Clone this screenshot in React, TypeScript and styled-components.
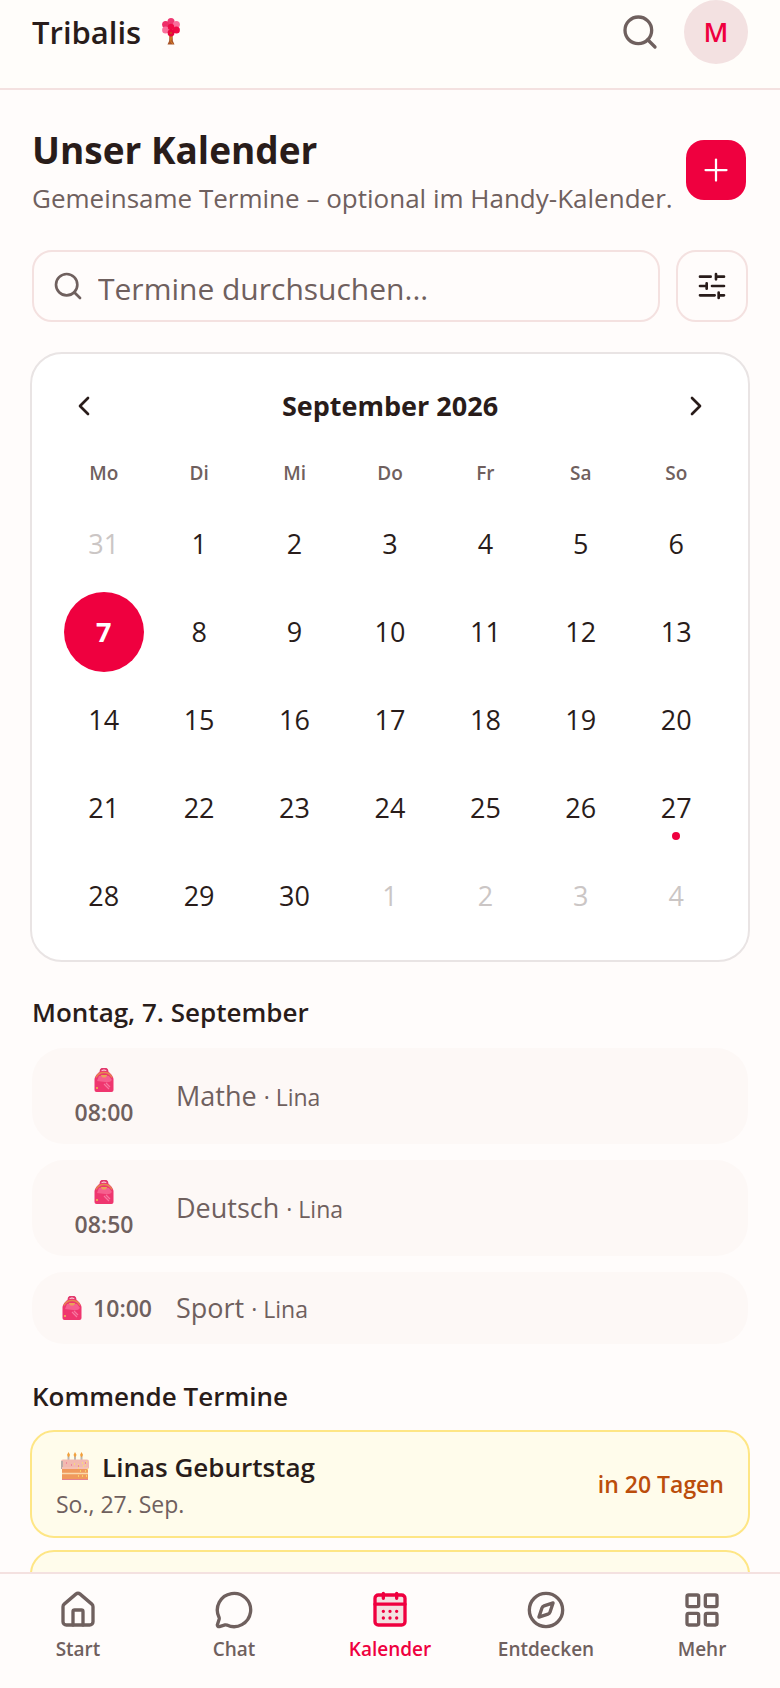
import React from 'react';
import styled, { createGlobalStyle, css } from 'styled-components';
import { ChevronLeft, ChevronRight, Compass, House, LayoutGrid, MessageCircle, Plus, Search } from 'lucide-react';

const color = {
  page: '#fffcfb',
  header: '#fffdfa',
  text: '#291c1a',
  muted: '#6f605e',
  line: '#f4e1e0',
  cardLine: '#e9e4e4',
  primary: '#ef003f',
  soft: '#f3e1e1',
};

const GlobalStyle = createGlobalStyle`
  *, *::before, *::after { box-sizing: border-box; }
  html, body { margin: 0; }
  body {
    background: ${color.page};
    color: ${color.text};
    font-family: "Open Sans", "Noto Sans", sans-serif;
    font-size: 27px;
    line-height: 36px;
  }
  button, input { font: inherit; color: inherit; }
  button { border: 0; padding: 0; background: none; cursor: pointer; }
  h1, h2, p, ul { margin: 0; padding: 0; }
  ul { list-style: none; }
`;

const Page = styled.div`
  height: 100vh;
  display: flex;
  flex-direction: column;
`;

const Header = styled.header`
  display: flex;
  align-items: center;
  justify-content: space-between;
  padding: 0 32px 24px;
  background: ${color.header};
  border-bottom: 2px solid ${color.line};
`;

const Brand = styled.a`
  display: flex;
  align-items: center;
  gap: 14px;
  height: 64px;
  color: inherit;
  text-decoration: none;
  font-size: 31px;
  font-weight: 600;
`;

const HeaderActions = styled.div`
  display: flex;
  align-items: center;
  gap: 24px;
`;

const IconButton = styled.button`
  display: flex;
  align-items: center;
  justify-content: center;
  color: ${color.muted};
`;

const Avatar = styled.button`
  width: 64px;
  height: 64px;
  border-radius: 50%;
  background: ${color.soft};
  color: ${color.primary};
  font-weight: 600;
`;

const Main = styled.main`
  flex: 1;
  min-height: 0;
  overflow: hidden;
  padding: 32px 30px 0;
`;

const TitleRow = styled.div`
  display: flex;
  align-items: center;
  justify-content: space-between;
  padding: 0 4px 0 2px;
`;

const Title = styled.h1`
  font-size: 37px;
  line-height: 56px;
  font-weight: 700;
`;

const Subtitle = styled.p`
  font-size: 26px;
  line-height: 40px;
  color: ${color.muted};
  white-space: nowrap;
`;

const AddButton = styled.button`
  flex: none;
  display: flex;
  align-items: center;
  justify-content: center;
  width: 60px;
  height: 60px;
  border-radius: 18px;
  background: ${color.primary};
  color: #fff;
`;

const SearchRow = styled.form`
  display: flex;
  gap: 16px;
  margin: 32px 2px 30px;
`;

const SearchField = styled.label`
  flex: 1;
  min-width: 0;
  display: flex;
  align-items: center;
  gap: 14px;
  height: 72px;
  padding: 0 18px;
  border: 2px solid ${color.line};
  border-radius: 20px;
  color: ${color.muted};
  svg { flex: none; }
`;

const SearchInput = styled.input`
  flex: 1;
  min-width: 0;
  height: 60px;
  padding: 4px 0 0;
  border: 0;
  outline: 0;
  background: none;
  font-size: 30px;
  &::placeholder { color: ${color.muted}; opacity: 1; }
`;

const FilterButton = styled.button`
  display: flex;
  align-items: center;
  justify-content: center;
  width: 72px;
  height: 72px;
  border: 2px solid ${color.line};
  border-radius: 20px;
`;

const CalendarCard = styled.section`
  padding: 20px 24px;
  border: 2px solid ${color.cardLine};
  border-radius: 32px;
  background: #fff;
`;

const MonthBar = styled.div`
  display: flex;
  align-items: center;
  justify-content: space-between;
  height: 64px;
`;

const MonthName = styled.h2`
  font-size: 27px;
  font-weight: 700;
`;

const MonthButton = styled.button`
  display: flex;
  align-items: center;
  justify-content: center;
  width: 56px;
  height: 64px;
`;

const MonthTable = styled.table`
  width: 100%;
  table-layout: fixed;
  border-collapse: collapse;
  th {
    height: 62px;
    padding: 8px 0 0;
    color: ${color.muted};
    font-size: 19px;
    font-weight: 600;
    line-height: 24px;
  }
  td {
    height: 88px;
    padding: 0;
  }
`;

const Day = styled.button<{ $outside?: boolean; $selected?: boolean }>`
  position: relative;
  display: block;
  width: 80px;
  height: 80px;
  margin: 0 auto;
  border-radius: 50%;
  ${(p) => p.$outside && css`color: #cbc6c5;`}
  ${(p) => p.$selected && css`
    background: ${color.primary};
    color: #fff;
    font-weight: 700;
  `}
`;

const EventDot = styled.span`
  position: absolute;
  left: 36px;
  bottom: 8px;
  width: 8px;
  height: 8px;
  border-radius: 50%;
  background: ${color.primary};
`;

const SectionTitle = styled.h2`
  padding: 0 2px;
  font-size: 26px;
  line-height: 40px;
  font-weight: 600;
`;

const DaySection = styled.section`
  margin-top: 30px;
`;

const LessonList = styled.ul`
  display: flex;
  flex-direction: column;
  gap: 16px;
  margin: 16px 2px 0;
`;

const Lesson = styled.li<{ $inline?: boolean }>`
  display: flex;
  align-items: center;
  gap: 24px;
  min-height: ${(p) => (p.$inline ? 72 : 96)}px;
  padding: 0 24px;
  border-radius: 32px;
  background: #fdf8f6;
  color: ${color.muted};
`;

const LessonTime = styled.div<{ $inline?: boolean }>`
  display: flex;
  flex-direction: ${(p) => (p.$inline ? 'row' : 'column')};
  align-items: center;
  justify-content: ${(p) => (p.$inline ? 'space-between' : 'center')};
  gap: 4px;
  width: 96px;
  padding: ${(p) => (p.$inline ? '0 0 0 6px' : '4px 0 0')};
  font-size: 23px;
  line-height: 32px;
  font-weight: 600;
`;

const Person = styled.span`
  font-size: 23px;
`;

const EventSection = styled.section`
  margin-top: 32px;
`;

const EventList = styled.ul`
  display: flex;
  flex-direction: column;
  gap: 12px;
  margin-top: 14px;
`;

const EventCard = styled.li`
  display: flex;
  align-items: center;
  justify-content: space-between;
  min-height: 108px;
  padding: 0 24px;
  border: 2px solid #fee685;
  border-radius: 24px;
  background: #fffceb;
`;

const EventName = styled.p`
  display: flex;
  align-items: center;
  gap: 12px;
  padding-left: 4px;
  font-size: 26px;
  line-height: 40px;
  font-weight: 600;
`;

const EventDate = styled.p`
  font-size: 23px;
  line-height: 34px;
  color: ${color.muted};
`;

const Countdown = styled.span`
  font-size: 23px;
  font-weight: 600;
  color: #bb4d0b;
`;

const TabBar = styled.nav`
  display: flex;
  height: 116px;
  border-top: 2px solid ${color.line};
  background: ${color.page};
`;

const Tab = styled.a<{ $active?: boolean }>`
  flex: 1;
  display: flex;
  flex-direction: column;
  align-items: center;
  gap: 4px;
  padding-top: 16px;
  color: ${(p) => (p.$active ? color.primary : color.muted)};
  text-decoration: none;
  font-size: 19px;
  line-height: 30px;
  font-weight: 600;
`;

const TreeIcon = () => (
  <svg width="32" height="32" viewBox="0 0 32 32" aria-hidden="true">
    <path d="M14.5 18h3l.4 7 1.6 3.5h-7l1.6-3.5z" fill="#a8562b" />
    <path d="M15 20l1 6 2 2M17 19l-1 5" stroke="#d97a1e" strokeWidth="1" fill="none" />
    <circle cx="16" cy="5.5" r="3.5" fill="#ef3a73" />
    <circle cx="10.600" cy="8.500" r="3.500" fill="#ee2e68" />
    <circle cx="21.400" cy="8.500" r="3.500" fill="#f9709c" />
    <circle cx="10.600" cy="14" r="3.500" fill="#f9709c" />
    <circle cx="21.400" cy="14" r="3.500" fill="#ef0a45" />
    <circle cx="16" cy="11" r="3.200" fill="#ef0a45" />
    <circle cx="16" cy="17" r="3.400" fill="#e8063c" />
    <circle cx="16" cy="17" r="1" fill="#c8501e" />
  </svg>
);

const BackpackIcon = () => (
  <svg width="20" height="24" viewBox="0 0 20 24" aria-hidden="true">
    <path d="M6.500 4V3a3.500 2.500 0 0 1 7 0v1" fill="none" stroke="#e2386c" strokeWidth="1.800" />
    <path d="M.5 22V11C1 8 4.500 2.500 10 2.500S19 8 19.500 11v11q0 2-2 2h-15q-2 0-2-2z" fill="#ef366f" />
    <path d="M5 8h10l3 4q-2 3-7 2L3 13z" fill="#f65f8e" />
    <path d="M2 9.500q2.500-5 8-5t8 5" fill="none" stroke="#e38a4e" strokeWidth="1.300" />
    <path d="M6.500 7h7l-2 2.500H8.500z" fill="#e9a25a" />
    <path d="M10 16l5 5M12 15l4 4" stroke="#f678a0" strokeWidth="1.200" />
    <rect x="2" y="19" width="2" height="2" fill="#efa057" />
  </svg>
);

const CakeIcon = () => (
  <svg width="30" height="30" viewBox="0 0 30 30" aria-hidden="true">
    <path d="M8.500 4v5M15 4v5M21.500 4v5" stroke="#bdb6b0" strokeWidth="2" />
    <path d="M8.500 0l1.600 3-1.600 2.500L7 3zM15 0l1.600 3-1.600 2.500L13.500 3zM21.500 0l1.600 3-1.600 2.500L20 3z" fill="#f2a03c" />
    <path d="M1 9.500q0-2 2-2h24q2 0 2 2v7H1z" fill="#f2b9b0" />
    <path d="M1 9v8h2V9z" fill="#b9aba8" />
    <path d="M2 17h26v11H2z" fill="#f0995c" />
    <path d="M2 17h26v-2H2z" fill="#f5c0b5" />
    <path d="M2 21.500h26" stroke="#fbd9ae" strokeWidth="1.500" />
    <path d="M2 27.500h26" stroke="#e38090" strokeWidth="1" />
    <path d="M14 12h1m3 1h1m3-2h1m2 2h1m0-3h1m-9 6h1m4-2h1m3 3h1m-8 2h1m4 0h1m-4 5h1m3 0h1m-9 0h1" stroke="#fbe26b" strokeWidth="1.500" />
    <path d="M6 11h1m4 2h1m6 1h1m6-3h1" stroke="#ea5a86" strokeWidth="1.200" />
  </svg>
);

const SlidersIcon = () => (
  <svg width="32" height="32" viewBox="0 0 24 24" fill="none" stroke="currentColor" strokeWidth="2" strokeLinecap="round" aria-hidden="true">
    <path d="M3 5h8M15 5h6M15 3v4M3 12h5M8 10v4M12 12h9M3 19h11M17 19h4M17 17v4" />
  </svg>
);

const CalendarIcon = () => (
  <svg width="40" height="40" viewBox="0 0 24 24" fill="none" stroke="currentColor" strokeWidth="2" strokeLinecap="round" strokeLinejoin="round" aria-hidden="true">
    <rect x="3" y="3" width="18" height="18" rx="2" fill={color.soft} />
    <path d="M8 2v3M16 2v3M3 8.500h18M8 12.800h.01M12 12.800h.01M16 12.800h.01M8 16.800h.01M12 16.800h.01M16 16.800h.01" />
  </svg>
);

const weekdays = ['Mo', 'Di', 'Mi', 'Do', 'Fr', 'Sa', 'So'];
const weeks = [
  [31, 1, 2, 3, 4, 5, 6],
  [7, 8, 9, 10, 11, 12, 13],
  [14, 15, 16, 17, 18, 19, 20],
  [21, 22, 23, 24, 25, 26, 27],
  [28, 29, 30, 1, 2, 3, 4],
];
const lessons = [
  { time: '08:00', subject: 'Mathe', person: 'Lina' },
  { time: '08:50', subject: 'Deutsch', person: 'Lina' },
  { time: '10:00', subject: 'Sport', person: 'Lina', inline: true },
];
const tabs = [
  { label: 'Start', icon: <House size={40} /> },
  { label: 'Chat', icon: <MessageCircle size={40} /> },
  { label: 'Kalender', icon: <CalendarIcon />, active: true },
  { label: 'Entdecken', icon: <Compass size={40} /> },
  { label: 'Mehr', icon: <LayoutGrid size={40} /> },
];

export default function App() {
  return (
    <Page>
      <GlobalStyle />
      <Header>
        <Brand href="#">Tribalis <TreeIcon /></Brand>
        <HeaderActions>
          <IconButton aria-label="Suchen"><Search size={40} /></IconButton>
          <Avatar aria-label="Profil">M</Avatar>
        </HeaderActions>
      </Header>
      <Main>
        <TitleRow>
          <div>
            <Title>Unser Kalender</Title>
            <Subtitle>Gemeinsame Termine – optional im Handy-Kalender.</Subtitle>
          </div>
          <AddButton aria-label="Termin hinzufügen"><Plus size={36} strokeWidth={1.5} /></AddButton>
        </TitleRow>
        <SearchRow>
          <SearchField>
            <Search size={32} />
            <SearchInput type="search" placeholder="Termine durchsuchen..." aria-label="Termine durchsuchen" />
          </SearchField>
          <FilterButton type="button" aria-label="Filter"><SlidersIcon /></FilterButton>
        </SearchRow>
        <CalendarCard>
          <MonthBar>
            <MonthButton aria-label="Vorheriger Monat"><ChevronLeft size={32} /></MonthButton>
            <MonthName>September 2026</MonthName>
            <MonthButton aria-label="Nächster Monat"><ChevronRight size={32} /></MonthButton>
          </MonthBar>
          <MonthTable>
            <thead>
              <tr>{weekdays.map((d) => <th key={d} scope="col">{d}</th>)}</tr>
            </thead>
            <tbody>
              {weeks.map((week, w) => (
                <tr key={w}>
                  {week.map((d) => (
                    <td key={d}>
                      <Day $outside={(w === 0 && d > 7) || (w === 4 && d < 7)} $selected={w === 1 && d === 7}>
                        {d}
                        {d === 27 && <EventDot />}
                      </Day>
                    </td>
                  ))}
                </tr>
              ))}
            </tbody>
          </MonthTable>
        </CalendarCard>
        <DaySection>
          <SectionTitle>Montag, 7. September</SectionTitle>
          <LessonList>
            {lessons.map((l) => (
              <Lesson key={l.time} $inline={l.inline}>
                <LessonTime $inline={l.inline}><BackpackIcon />{l.time}</LessonTime>
                <div>{l.subject} <Person>· {l.person}</Person></div>
              </Lesson>
            ))}
          </LessonList>
        </DaySection>
        <EventSection>
          <SectionTitle>Kommende Termine</SectionTitle>
          <EventList>
            <EventCard>
              <div>
                <EventName><CakeIcon />Linas Geburtstag</EventName>
                <EventDate>So., 27. Sep.</EventDate>
              </div>
              <Countdown>in 20 Tagen</Countdown>
            </EventCard>
            <EventCard />
          </EventList>
        </EventSection>
      </Main>
      <TabBar>
        {tabs.map((t) => (
          <Tab key={t.label} href="#" $active={t.active} aria-current={t.active ? 'page' : undefined}>
            {t.icon}
            {t.label}
          </Tab>
        ))}
      </TabBar>
    </Page>
  );
}
